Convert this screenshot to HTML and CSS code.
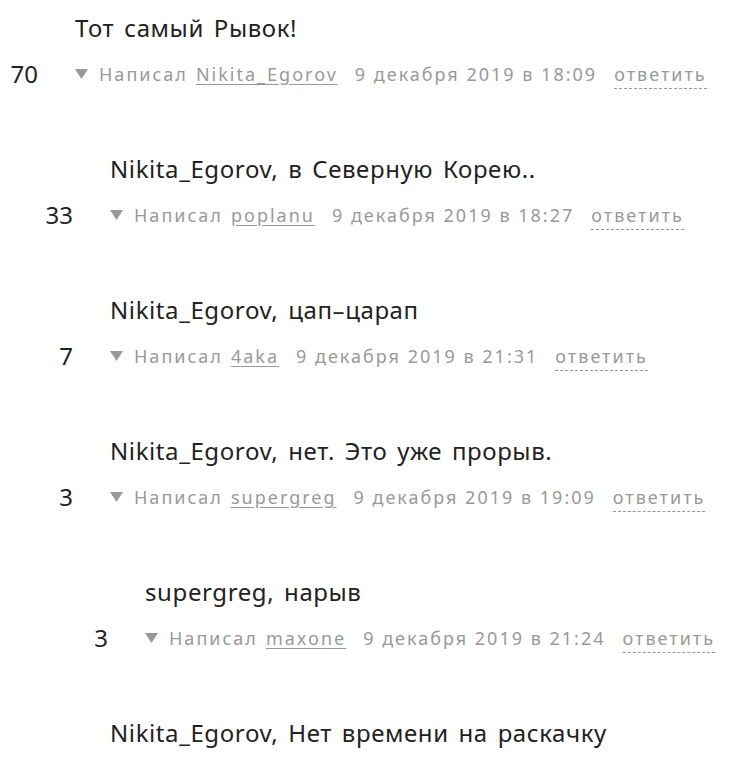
FILE: index.html
```html
<!DOCTYPE html>
<html lang="ru">
<head>
    <meta charset="UTF-8">
    <title>Комментарии</title>
    <link rel="stylesheet" href="styles.css">
</head>
<body>
    <div class="comments">

        <div class="comment">
            <div class="text">Тот самый Рывок!</div>
            <div class="score">70</div>
            <div class="meta">
                <svg class="arrow" width="13" height="10" viewBox="0 0 13 10"><polygon points="0,0 13,0 6.5,10" fill="#999"/></svg>
                <span class="label">Написал</span>
                <a class="author" href="#">Nikita_Egorov</a>
                <span class="date">9 декабря 2019 в 18:09</span>
                <a class="reply" href="#">ответить</a>
            </div>
        </div>

        <div class="comment level1">
            <div class="text">Nikita_Egorov, в Северную Корею..</div>
            <div class="score">33</div>
            <div class="meta">
                <svg class="arrow" width="13" height="10" viewBox="0 0 13 10"><polygon points="0,0 13,0 6.5,10" fill="#999"/></svg>
                <span class="label">Написал</span>
                <a class="author" href="#">poplanu</a>
                <span class="date">9 декабря 2019 в 18:27</span>
                <a class="reply" href="#">ответить</a>
            </div>
        </div>

        <div class="comment level1">
            <div class="text">Nikita_Egorov, цап–царап</div>
            <div class="score">7</div>
            <div class="meta">
                <svg class="arrow" width="13" height="10" viewBox="0 0 13 10"><polygon points="0,0 13,0 6.5,10" fill="#999"/></svg>
                <span class="label">Написал</span>
                <a class="author" href="#">4aka</a>
                <span class="date">9 декабря 2019 в 21:31</span>
                <a class="reply" href="#">ответить</a>
            </div>
        </div>

        <div class="comment level1">
            <div class="text">Nikita_Egorov, нет. Это уже прорыв.</div>
            <div class="score">3</div>
            <div class="meta">
                <svg class="arrow" width="13" height="10" viewBox="0 0 13 10"><polygon points="0,0 13,0 6.5,10" fill="#999"/></svg>
                <span class="label">Написал</span>
                <a class="author" href="#">supergreg</a>
                <span class="date">9 декабря 2019 в 19:09</span>
                <a class="reply" href="#">ответить</a>
            </div>
        </div>

        <div class="comment level2">
            <div class="text">supergreg, нарыв</div>
            <div class="score">3</div>
            <div class="meta">
                <svg class="arrow" width="13" height="10" viewBox="0 0 13 10"><polygon points="0,0 13,0 6.5,10" fill="#999"/></svg>
                <span class="label">Написал</span>
                <a class="author" href="#">maxone</a>
                <span class="date">9 декабря 2019 в 21:24</span>
                <a class="reply" href="#">ответить</a>
            </div>
        </div>

        <div class="comment level1">
            <div class="text">Nikita_Egorov, Нет времени на раскачку</div>
        </div>

    </div>
</body>
</html>
```

FILE: styles.css
```css
body
{
    margin: 0;
    background: #fff;
    font-family: "Noto Sans", "Open Sans", sans-serif;
    overflow: hidden;
}
.comments
{
    padding-top: 12px;
}
.comment
{
    display: grid;
    grid-template-columns: 75px auto;
    grid-template-rows: 32px 32px;
    row-gap: 14px;
    height: 141px;
}
.level1
{
    margin-left: 35px;
}
.level2
{
    margin-left: 70px;
}
.text
{
    grid-column: 2;
    grid-row: 1;
    font-size: 24px;
    line-height: 32px;
    color: #222;
    letter-spacing: 0.6px;
    word-spacing: 3px;
}
.score
{
    grid-column: 1;
    grid-row: 2;
    text-align: right;
    padding-right: 37px;
    font-size: 24px;
    line-height: 32px;
    color: #222;
}
.meta
{
    grid-column: 2;
    grid-row: 2;
    display: flex;
    align-items: baseline;
    font-size: 18px;
    letter-spacing: 2px;
    line-height: 32px;
    color: #999;
    white-space: nowrap;
}
.arrow
{
    align-self: center;
    margin-right: 11px;
}
.label
{
    margin-right: 8px;
}
.author
{
    color: #999;
    text-decoration: underline;
    text-underline-offset: 3px;
    margin-right: 17px;
}
.date
{
    margin-right: 17px;
}
.reply
{
    color: #999;
    text-decoration: none;
    line-height: 24px;
    padding-bottom: 2px;
    border-bottom: 1px dashed #999;
}
```
